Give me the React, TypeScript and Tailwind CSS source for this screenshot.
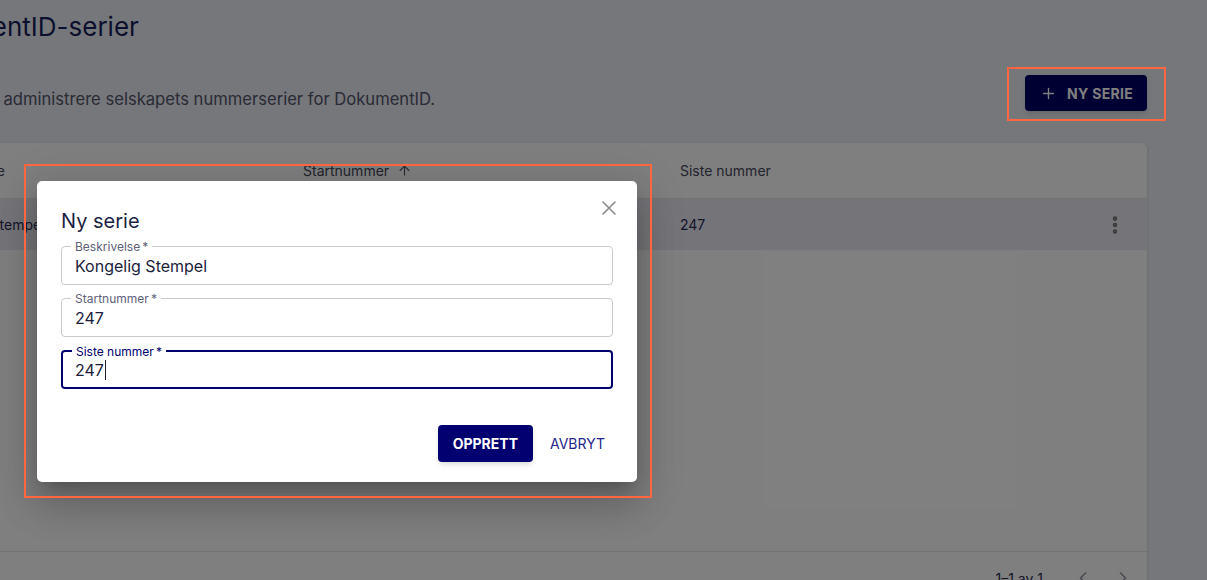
import { Plus, ArrowUp, EllipsisVertical, ChevronLeft, ChevronRight } from "lucide-react";

interface FieldProps {
  label: string;
  value: string;
  focused?: boolean;
}

const Field: React.FC<FieldProps> = ({ label, value, focused }) => {
  return (
    <div
      className={`relative h-[39px] rounded-[4px] flex items-center ${
        focused ? "border-2 border-[#00006e] px-[12px]" : "border border-[#c9c9cf] px-[13px]"
      }`}
    >
      {/* notched label */}
      <span
        className={`absolute -top-2 left-[9px] bg-white px-[4px] text-[12px] leading-4 ${
          focused ? "text-[#00006e]" : "text-[#5d6079]"
        }`}
      >
        {label}&thinsp;*
      </span>
      <span className="text-[16px] text-[#1b1d3a]">{value}</span>
      {focused && <span className="w-px h-[21px] bg-[#1b1d3a] ml-px" />}
    </div>
  );
};

export default function App() {
  return (
    <div className="relative w-[1207px] h-[580px] overflow-hidden bg-[#eceef6] font-['Inter',sans-serif]">
      {/* Page, scrolled so the left side is cut off */}
      <div className="-ml-[79px] mr-[60px]">
        <h1 className="-ml-4 pt-[11px] text-[26px] leading-8 text-[#1a1e5c]">DokumentID-serier</h1>

        <div className="mt-8 flex items-end justify-between">
          <p className="-ml-[8px] text-[16.6px] leading-6 text-[#55566a]">
            Her kan du administrere selskapets nummerserier for DokumentID.
          </p>
          <button className="h-9 flex items-center gap-[10px] pl-[15px] pr-[14px] rounded-[4px] bg-[#000066] text-white text-[14px] font-bold tracking-[0.3px] shadow-md">
            <Plus size={17} strokeWidth={2} />
            NY SERIE
          </button>
        </div>

        {/* Table */}
        <div className="mt-8 bg-white rounded-t-[6px] shadow-[0_1px_3px_rgba(0,0,0,0.15)] text-[14px]">
          <div className="grid grid-cols-[370px_377px_1fr_62px] h-[56px] items-center border-b border-[#e4e4ea] text-[#47485a]">
            <div className="px-[8px]">Beskrivelse</div>
            <div className="px-3 flex items-center gap-2">
              Startnummer
              <ArrowUp size={15} strokeWidth={1.8} className="text-[#55566a]" />
            </div>
            <div className="px-3">Siste nummer</div>
            <div />
          </div>
          <div className="grid grid-cols-[370px_377px_1fr_62px] h-[51px] items-center bg-[#ebebf3] text-[#2a2c52]">
            <div className="px-[8px]">Kongelig Stempel</div>
            <div className="px-3">247</div>
            <div className="px-3">247</div>
            <div className="flex justify-start pl-[19px] text-[#757575]">
              <EllipsisVertical size={22} strokeWidth={3} />
            </div>
          </div>
          <div className="h-[302px] border-b border-[#e4e4ea]" />
          <div className="h-[52px] flex items-center justify-end pr-[4px] text-[#2a2c52]">
            <span className="mr-[20px]">1–1 av 1</span>
            <span className="w-10 flex justify-center text-[#9a9aa8]">
              <ChevronLeft size={20} />
            </span>
            <span className="w-10 flex justify-center text-[#9a9aa8]">
              <ChevronRight size={20} />
            </span>
          </div>
        </div>
      </div>

      {/* Backdrop */}
      <div className="absolute inset-0 bg-black/50" />

      {/* Dialog */}
      <div className="absolute left-[37px] top-[181px] w-[600px] h-[301px] bg-white rounded-[5px] shadow-[0_11px_15px_-7px_rgba(0,0,0,0.2),0_24px_38px_3px_rgba(0,0,0,0.14),0_9px_46px_8px_rgba(0,0,0,0.12)] px-6 pt-[26px] pb-5 flex flex-col">
        <button className="absolute left-[565px] top-[20px] text-[#8a8a8a]">
          <svg width="14" height="14" viewBox="0 0 14 14" fill="none" stroke="currentColor" strokeWidth="1.6" strokeLinecap="round">
            <path d="M1 1 L13 13 M13 1 L1 13" />
          </svg>
        </button>
        <h2 className="text-[20px] leading-7 text-[#1b1f45]">Ny serie</h2>
        <div className="mt-[11px] flex flex-col gap-[13px]">
          <Field label="Beskrivelse" value="Kongelig Stempel" />
          <Field label="Startnummer" value="247" />
          <Field label="Siste nummer" value="247" focused />
        </div>
        <div className="mt-9 flex justify-end gap-[9px]">
          <button className="h-[37px] px-[15px] rounded-[4px] bg-[#020070] text-white text-[14px] font-bold shadow-md">
            OPPRETT
          </button>
          <button className="h-[37px] px-2 text-[14px] text-[#26268a]">AVBRYT</button>
        </div>
      </div>

      {/* Highlight annotations */}
      <div className="absolute left-[1007px] top-[67px] w-[159px] h-[54px] border-2 border-[#ff6540]" />
      <div className="absolute left-[24px] top-[164px] w-[628px] h-[334px] border-2 border-[#ff6540]" />
    </div>
  );
}
